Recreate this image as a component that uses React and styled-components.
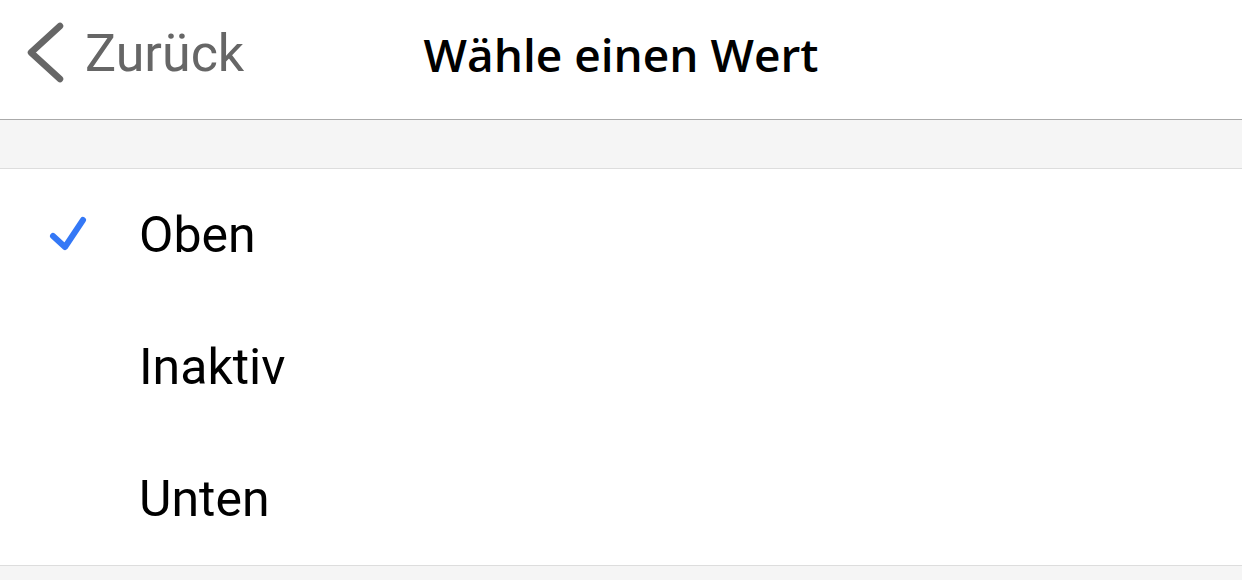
import styled, { createGlobalStyle } from 'styled-components';

const GlobalStyle = createGlobalStyle`
    html, body {
        margin: 0;
        padding: 0;
        background-color: #f5f5f5;
        font-family: Roboto, "Noto Sans", sans-serif;
    }
`

const options = ['Oben', 'Inaktiv', 'Unten'];

export default function App(){
    const selected = 'Oben';

    return(
        <>
            <GlobalStyle />
            <Header>
                <BackButton>
                    <svg width="40" height="64" viewBox="0 0 40 64">
                        <path
                            d="M34 4 L5 30.5 L34 57"
                            fill="none"
                            stroke="#666"
                            strokeWidth="6.5"
                            strokeLinecap="round"
                            strokeLinejoin="round"
                        />
                    </svg>
                    <span>Zurück</span>
                </BackButton>
                <Title>Wähle einen Wert</Title>
                <div />
            </Header>
            <Spacer />
            <List>
                {options.map(option => (
                    <Row key={option}>
                        <CheckSlot>
                            {option === selected && (
                                <svg width="40" height="40" viewBox="0 0 40 40">
                                    <path
                                        d="M5 21 L17 32 L35 5"
                                        fill="none"
                                        stroke="#3478f6"
                                        strokeWidth="6"
                                        strokeLinecap="round"
                                        strokeLinejoin="round"
                                    />
                                </svg>
                            )}
                        </CheckSlot>
                        <Label>{option}</Label>
                    </Row>
                ))}
            </List>
        </>
    )
}

const Header = styled.div`
    height: 120px;
    box-sizing: border-box;
    padding: 0 0 12px 0;
    background-color: #fff;
    border-bottom: 1px solid #aaa;
    display: grid;
    grid-template-columns: 1fr auto 1fr;
    align-items: center;
`

const BackButton = styled.div`
    display: flex;
    align-items: center;
    gap: 19px;
    padding-left: 26px;
    color: #666;
    font-size: 52px;
    cursor: pointer;
    svg{
        flex-shrink: 0;
    }
`

const Title = styled.div`
    font-family: "Open Sans", sans-serif;
    font-weight: 600;
    font-size: 46px;
    color: #000;
`

const Spacer = styled.div`
    height: 48px;
    background-color: #f5f5f5;
    border-bottom: 1px solid #ddd;
`

const List = styled.div`
    background-color: #fff;
    border-bottom: 1px solid #ddd;
`

const Row = styled.div`
    height: 132px;
    display: flex;
    align-items: center;
`

const CheckSlot = styled.div`
    width: 139px;
    padding-left: 48px;
    box-sizing: border-box;
    display: flex;
    align-items: center;
`

const Label = styled.div`
    font-size: 50px;
    color: #000;
`
